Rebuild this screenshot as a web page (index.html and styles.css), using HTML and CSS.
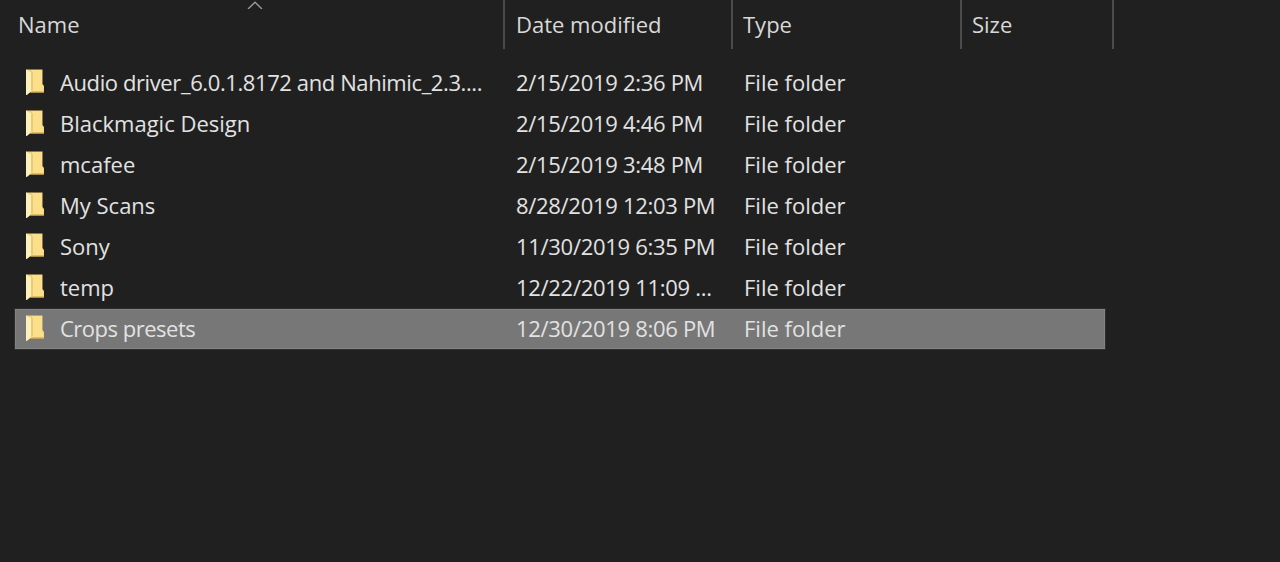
FILE: index.html
```html
<!DOCTYPE html>
<html lang="en">
<head>
<meta charset="utf-8">
<title>Folder list</title>
<link rel="stylesheet" href="styles.css">
</head>
<body>
<svg class="defs" width="0" height="0" aria-hidden="true">
  <symbol id="folder" viewBox="0 0 19 26">
    <path d="M1 .5H17.5V15L19 17V23.5H5L1 26Z" fill="#f3cf72"/>
    <path d="M7 1H17V15.5L18.5 17.5V22.5H7Z" fill="#fbdf8b"/>
    <path d="M1 .5L6.5 3.5V21.5L2.5 25.5L1 26Z" fill="#fdf0b8"/>
    <path d="M6.5 3.5L7.5 3V21.5H6.5Z" fill="#d8b660"/>
    <path d="M7 22.5H19V23.5H5.5Z" fill="#c9a24e"/>
  </symbol>
</svg>
<main class="explorer">
  <header class="head">
    <span class="sort" aria-hidden="true"><svg width="16" height="8" viewBox="0 0 16 8"><path d="M1 8L8 1.2L15 8" fill="none" stroke="#9a9a9a" stroke-width="1.4"/></svg></span>
    <div class="hcell c-name">Name</div>
    <div class="hcell c-date">Date modified</div>
    <div class="hcell c-type">Type</div>
    <div class="hcell c-size">Size</div>
  </header>
  <div class="rows">
    <div class="row"><div class="c-name cell"><svg class="ico"><use href="#folder"/></svg><span class="tight">Audio driver_6.0.1.8172 and Nahimic_2.3....</span></div><div class="c-date cell">2/15/2019 2:36 PM</div><div class="c-type cell">File folder</div></div>
    <div class="row"><div class="c-name cell"><svg class="ico"><use href="#folder"/></svg><span>Blackmagic Design</span></div><div class="c-date cell">2/15/2019 4:46 PM</div><div class="c-type cell">File folder</div></div>
    <div class="row"><div class="c-name cell"><svg class="ico"><use href="#folder"/></svg><span>mcafee</span></div><div class="c-date cell">2/15/2019 3:48 PM</div><div class="c-type cell">File folder</div></div>
    <div class="row"><div class="c-name cell"><svg class="ico"><use href="#folder"/></svg><span>My Scans</span></div><div class="c-date cell">8/28/2019 12:03 PM</div><div class="c-type cell">File folder</div></div>
    <div class="row"><div class="c-name cell"><svg class="ico"><use href="#folder"/></svg><span>Sony</span></div><div class="c-date cell">11/30/2019 6:35 PM</div><div class="c-type cell">File folder</div></div>
    <div class="row"><div class="c-name cell"><svg class="ico"><use href="#folder"/></svg><span>temp</span></div><div class="c-date cell">12/22/2019 11:09 ...</div><div class="c-type cell">File folder</div></div>
    <div class="row selected"><div class="c-name cell"><svg class="ico"><use href="#folder"/></svg><span class="tighter">Crops presets</span></div><div class="c-date cell">12/30/2019 8:06 PM</div><div class="c-type cell">File folder</div></div>
  </div>
</main>
</body>
</html>
```
FILE: styles.css
```css
html, body {
  margin: 0;
  height: 100%;
  background: #202020;
  overflow: hidden;
}
.defs { position: absolute; }
.explorer {
  font-family: "Open Sans", "Noto Sans", sans-serif;
  font-size: 22px;
  color: #e2e2e2;
}
.head {
  position: relative;
  display: flex;
  height: 49px;
  width: 1114px;
  color: #d8d8d8;
}
.sort {
  position: absolute;
  left: 247px;
  top: 0;
  line-height: 0;
}
.hcell {
  box-sizing: border-box;
  padding-top: 9px;
  line-height: 30px;
  border-right: 2px solid #4b4b4b;
}
.head .c-name { width: 505px; padding-left: 18px; }
.head .c-date { width: 228px; padding-left: 11px; }
.head .c-type { width: 229px; padding-left: 10px; }
.head .c-size { width: 152px; padding-left: 10px; }
.rows {
  padding: 14px 0 0 15px;
  display: flex;
  flex-direction: column;
  gap: 1px;
}
.row {
  box-sizing: border-box;
  display: flex;
  align-items: center;
  width: 1090px;
  height: 40px;
  padding: 0 0 2px;
}
.selected {
  background: #777777;
  box-shadow: inset 0 0 0 1px #828282, 0 0 0 1px #2e2e2e;
}
.cell { white-space: nowrap; }
.row .c-name {
  display: flex;
  align-items: center;
  gap: 16px;
  width: 489px;
  padding-left: 10px;
  box-sizing: border-box;
}
.row .c-date {
  width: 229px;
  padding-left: 12px;
  box-sizing: border-box;
  letter-spacing: -0.3px;
}
.row .c-type { padding-left: 11px; }
.tight { letter-spacing: -0.4px; }
.tighter { letter-spacing: -0.5px; }
.ico { width: 19px; height: 26px; flex: none; }
```
